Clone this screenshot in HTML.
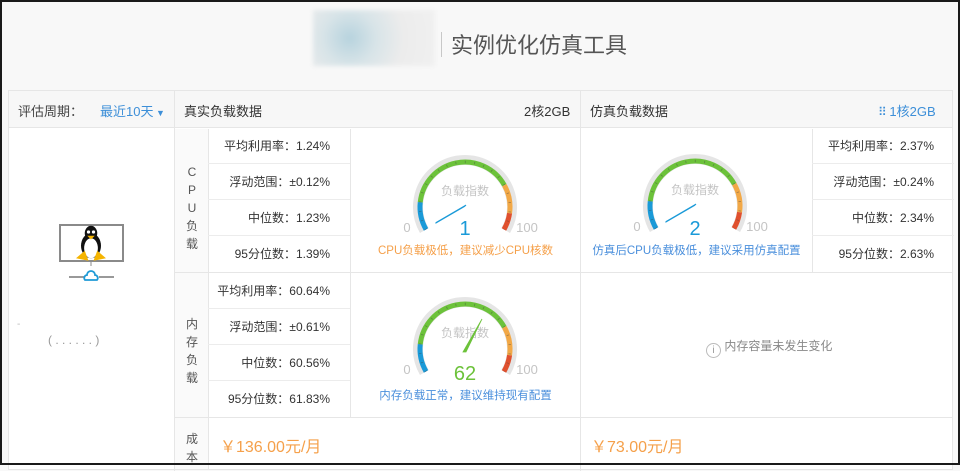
<!DOCTYPE html>
<html><head><meta charset="utf-8"><style>
*{margin:0;padding:0;box-sizing:border-box}
body{width:960px;height:465px;overflow:hidden;background:#f8f8f8;font-family:"Liberation Sans","Noto Sans CJK SC",sans-serif;font-size:12px;color:#333;position:relative}
.frame{position:absolute;left:0;top:0;width:960px;height:465px;border:2px solid #1a1a1a;z-index:10;pointer-events:none}
.a{position:absolute}
.b{position:absolute;background:#e6e6e6}
.st{position:absolute;width:142px;height:36px;line-height:36px;text-align:right;padding-right:20px;border-bottom:1px solid #ececec}
.vl{position:absolute;width:34px;text-align:center;color:#555;font-size:12px;line-height:18px}
.cap{position:absolute;text-align:center;font-size:11.5px;white-space:nowrap}
</style></head><body>
<div class="frame"></div>
<div class="a" style="left:313px;top:10px;width:122px;height:56px;background:radial-gradient(circle at 30% 50%,#b7d3de 0,#d8e4e8 30%,#ececec 60%,#f0f0f0 100%);filter:blur(2px)"></div>
<div class="a" style="left:441px;top:32px;width:1px;height:25px;background:#c8c8c8"></div>
<div class="a" style="left:451px;top:31px;font-size:22px;color:#555;line-height:30px">实例优化仿真工具</div>

<div class="a" style="left:8px;top:90px;width:945px;height:380px;background:#fff;border:1px solid #e6e6e6"></div>
<div class="a" style="left:9px;top:91px;width:943px;height:37px;background:#f7f7f7;border-bottom:1px solid #e6e6e6"></div>
<div class="b" style="left:174px;top:91px;width:1px;height:380px"></div>
<div class="b" style="left:580px;top:91px;width:1px;height:380px"></div>
<div class="a" style="left:175px;top:129px;width:33px;height:340px;background:#fafafa"></div>
<div class="b" style="left:208px;top:129px;width:1px;height:340px"></div>
<div class="b" style="left:350px;top:129px;width:1px;height:288px"></div>
<div class="b" style="left:812px;top:129px;width:1px;height:143px"></div>
<div class="b" style="left:175px;top:272px;width:778px;height:1px"></div>
<div class="b" style="left:175px;top:417px;width:778px;height:1px"></div>

<div class="a" style="left:18px;top:101px;color:#444;font-size:13px">评估周期：</div>
<div class="a" style="left:100px;top:101px;color:#3d8fd8;font-size:13px">最近10天<span style="font-size:9px"> ▼</span></div>
<div class="a" style="left:184px;top:101px;color:#333;font-size:13px">真实负载数据</div>
<div class="a" style="left:524px;top:101px;color:#333;font-size:13px">2核2GB</div>
<div class="a" style="left:590px;top:101px;color:#333;font-size:13px">仿真负载数据</div>
<div class="a" style="left:878px;top:101px;color:#3d8fd8;font-size:13px"><span style="letter-spacing:-1px;font-size:12px">⠿</span> 1核2GB</div>

<div class="vl" style="left:175px;top:163px">C<br>P<br>U<br>负<br>载</div>
<div class="vl" style="left:175px;top:315px">内<br>存<br>负<br>载</div>
<div class="vl" style="left:175px;top:430px">成<br>本</div>

<div class="st" style="left:208px;top:128px">平均利用率：1.24%</div>
<div class="st" style="left:208px;top:164px">浮动范围：±0.12%</div>
<div class="st" style="left:208px;top:200px">中位数：1.23%</div>
<div class="st" style="left:208px;top:236px;border:0">95分位数：1.39%</div>
<div class="st" style="left:208px;top:273px">平均利用率：60.64%</div>
<div class="st" style="left:208px;top:309px">浮动范围：±0.61%</div>
<div class="st" style="left:208px;top:345px">中位数：60.56%</div>
<div class="st" style="left:208px;top:381px;border:0">95分位数：61.83%</div>
<div class="st" style="left:812px;top:128px">平均利用率：2.37%</div>
<div class="st" style="left:812px;top:164px">浮动范围：±0.24%</div>
<div class="st" style="left:812px;top:200px">中位数：2.34%</div>
<div class="st" style="left:812px;top:236px;border:0">95分位数：2.63%</div>

<div class="a" style="left:220px;top:433px;color:#f5a04a;font-size:16px">￥136.00元/月</div>
<div class="a" style="left:591px;top:433px;color:#f5a04a;font-size:16px">￥73.00元/月</div>

<div class="a" style="left:706px;top:337px;color:#888;font-size:12px"><span style="display:inline-block;width:15px;height:15px;border:1px solid #bbb;border-radius:50%;text-align:center;line-height:13px;font-size:10px;color:#999;vertical-align:-3px">i</span> 内存容量未发生变化</div>

<div class="cap" style="left:351px;width:229px;top:242px;color:#f5a04a">CPU负载极低，建议减少CPU核数</div>
<div class="cap" style="left:581px;width:231px;top:242px;color:#4a8fdc">仿真后CPU负载极低，建议采用仿真配置</div>
<div class="cap" style="left:351px;width:229px;top:387px;color:#4a8fdc">内存负载正常，建议维持现有配置</div>

<div class="a" style="left:59px;top:224px;width:65px;height:38px;border:2px solid #8a8a8a;background:#fff"></div>
<svg class="a" style="left:0;top:0" width="960" height="465">
<g transform="translate(91,242) scale(1.25)">
<ellipse cx="0" cy="3" rx="8" ry="10" fill="#111"/>
<ellipse cx="0" cy="-7" rx="5" ry="6" fill="#111"/>
<ellipse cx="0" cy="5" rx="5.5" ry="8" fill="#fff"/>
<circle cx="-2" cy="-8" r="1.3" fill="#fff"/><circle cx="2" cy="-8" r="1.3" fill="#fff"/>
<path d="M-3,-5 L3,-5 L0,-2Z" fill="#f5b400"/>
<path d="M-12,13 L-5,7 L-2,15Z" fill="#f5b400"/>
<path d="M12,13 L5,7 L2,15Z" fill="#f5b400"/>
</g>
<line x1="69" y1="277" x2="84" y2="277" stroke="#777" stroke-width="1.5"/>
<line x1="99" y1="277" x2="114" y2="277" stroke="#777" stroke-width="1.5"/>
<path d="M85,280 a3,3 0 0 1 2,-5 a4,4 0 0 1 8,0 a3,3 0 0 1 2,5Z" fill="none" stroke="#1e9ad6" stroke-width="1.8"/>
<line x1="91" y1="262" x2="91" y2="266" stroke="#888"/>
<text x="17" y="327" fill="#bbb" font-size="10">-</text>
<text x="48" y="344" fill="#999" font-size="12" font-family="Liberation Sans">(   . . . .   .   . )</text>

<defs>
<g id="gauge">
<path d="M-40.7,23.5 A47,47 0 1 1 40.7,23.5" fill="none" stroke="#e5e5e5" stroke-width="10"/>
<path d="M-38.97,22.5 A45,45 0 0 1 -44.75,-4.7" fill="none" stroke="#1a9ad8" stroke-width="5"/>
<path d="M-44.75,-4.7 A45,45 0 0 1 39.36,-21.82" fill="none" stroke="#6cc23a" stroke-width="5"/>
<path d="M39.36,-21.82 A45,45 0 0 1 44.56,6.26" fill="none" stroke="#f2a846" stroke-width="5"/>
<path d="M44.56,6.26 A45,45 0 0 1 38.97,22.5" fill="none" stroke="#e0502e" stroke-width="5"/>
<path d="M-38.97,22.5 A45,45 0 1 1 38.97,22.5" fill="none" stroke="#444" stroke-opacity="0.45" stroke-width="2.5" stroke-dasharray="0.8 8.6"/>
<text x="0" y="-12" text-anchor="middle" fill="#c4c4c4" font-size="12">负载指数</text>
<text x="-58" y="25" text-anchor="middle" fill="#c4c4c4" font-size="13">0</text>
<text x="62" y="25" text-anchor="middle" fill="#c4c4c4" font-size="13">100</text>
</g>
</defs>
<g transform="translate(465,207)"><use href="#gauge"/>
<path d="M-29,15.5 L1,-2 L-0.5,-0.5 L-29,16Z" fill="#1a9ad8" stroke="#1a9ad8" stroke-width="1"/>
<text x="0" y="28" text-anchor="middle" fill="#1a9ad8" font-size="20">1</text></g>
<g transform="translate(695,206)"><use href="#gauge"/>
<path d="M-29,15.5 L1,-2 L-0.5,-0.5 L-29,16Z" fill="#1a9ad8" stroke="#1a9ad8" stroke-width="1"/>
<text x="0" y="29" text-anchor="middle" fill="#1a9ad8" font-size="20">2</text></g>
<g transform="translate(465,349)"><use href="#gauge"/>
<path d="M-2,3 L17,-30 L1,3Z" fill="#6cc23a" stroke="#6cc23a" stroke-width="0.8"/>
<text x="0" y="31" text-anchor="middle" fill="#6cc23a" font-size="20">62</text></g>
</svg>
</body></html>
